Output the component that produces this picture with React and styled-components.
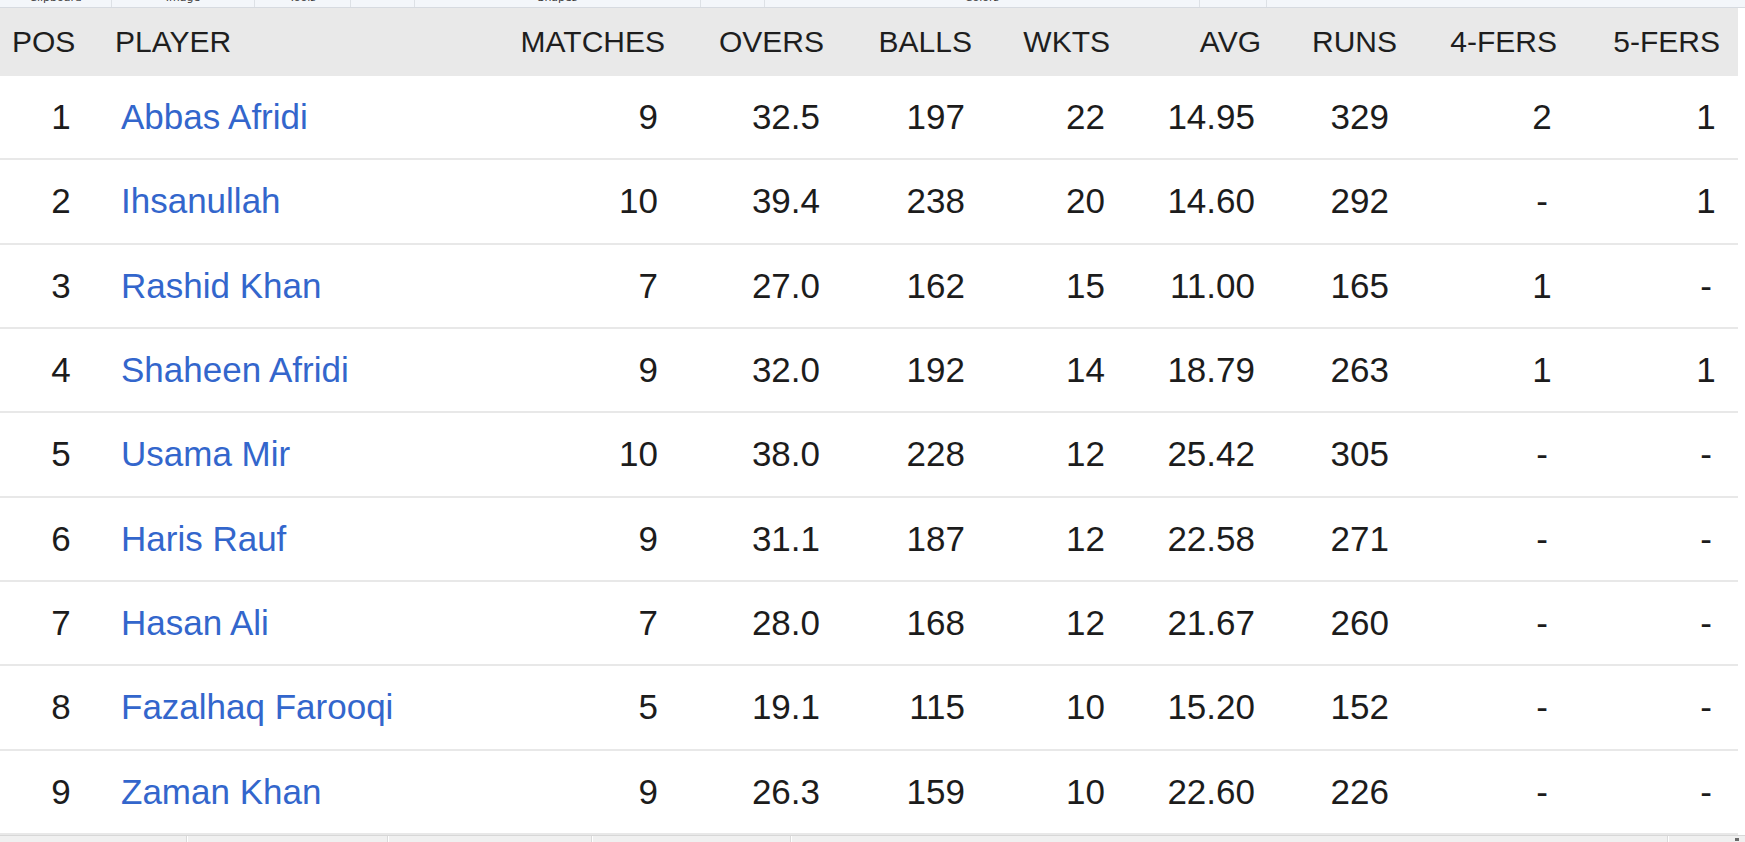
import React from "react";
import styled, { createGlobalStyle } from "styled-components";

const GlobalStyle = createGlobalStyle`
  html, body {
    margin: 0;
    padding: 0;
    background: #ffffff;
    overflow: hidden;
  }
  body {
    font-family: "Liberation Sans", Arial, sans-serif;
  }
`;

const columns = [
  { key: "pos", label: "POS", width: 100, head: "left", hpad: "0 0 0 12px", body: "center", bpad: "0 0 0 22px" },
  { key: "player", label: "PLAYER", width: 350, head: "left", hpad: "0 0 0 15px", body: "left", bpad: "0 0 0 21px" },
  { key: "matches", label: "MATCHES", width: 220, head: "right", hpad: "0 5px 0 0", body: "right", bpad: "0 12px 0 0" },
  { key: "overs", label: "OVERS", width: 160, head: "right", hpad: "0 6px 0 0", body: "right", bpad: "0 10px 0 0" },
  { key: "balls", label: "BALLS", width: 146, head: "right", hpad: "0 4px 0 0", body: "right", bpad: "0 11px 0 0" },
  { key: "wkts", label: "WKTS", width: 138, head: "right", hpad: "0 4px 0 0", body: "right", bpad: "0 9px 0 0" },
  { key: "avg", label: "AVG", width: 152, head: "right", hpad: "0 5px 0 0", body: "right", bpad: "0 11px 0 0" },
  { key: "runs", label: "RUNS", width: 136, head: "right", hpad: "0 5px 0 0", body: "right", bpad: "0 13px 0 0" },
  { key: "four", label: "4-FERS", width: 160, head: "right", hpad: "0 5px 0 0", body: "center", bpad: "0 0 0 120px" },
  { key: "five", label: "5-FERS", width: 176, head: "right", hpad: "0 18px 0 0", body: "center", bpad: "0 0 0 112px" },
];

const players = [
  ["1", "Abbas Afridi", "9", "32.5", "197", "22", "14.95", "329", "2", "1"],
  ["2", "Ihsanullah", "10", "39.4", "238", "20", "14.60", "292", "-", "1"],
  ["3", "Rashid Khan", "7", "27.0", "162", "15", "11.00", "165", "1", "-"],
  ["4", "Shaheen Afridi", "9", "32.0", "192", "14", "18.79", "263", "1", "1"],
  ["5", "Usama Mir", "10", "38.0", "228", "12", "25.42", "305", "-", "-"],
  ["6", "Haris Rauf", "9", "31.1", "187", "12", "22.58", "271", "-", "-"],
  ["7", "Hasan Ali", "7", "28.0", "168", "12", "21.67", "260", "-", "-"],
  ["8", "Fazalhaq Farooqi", "5", "19.1", "115", "10", "15.20", "152", "-", "-"],
  ["9", "Zaman Khan", "9", "26.3", "159", "10", "22.60", "226", "-", "-"],
];

const ribbonGroups = [
  { label: "Clipboard", width: 111 },
  { label: "Image", width: 142 },
  { label: "Tools", width: 95 },
  { label: "", width: 63 },
  { label: "Shapes", width: 285 },
  { label: "", width: 63 },
  { label: "Colors", width: 434 },
  { label: "", width: 66 },
];

const statusCells = [186, 200, 203, 198, 876];

const gridCols = columns.map((c) => `${c.width}px`).join(" ");

const App = () => {
  return (
    <Page>
      <GlobalStyle />
      <Ribbon>
        {ribbonGroups.map((g, i) => (
          <RibbonGroup key={i} $w={g.width}>
            <RibbonLabel>{g.label}</RibbonLabel>
          </RibbonGroup>
        ))}
      </Ribbon>

      <Table>
        <HeadRow>
          {columns.map((c) => (
            <HeadCell key={c.key} $align={c.head} $pad={c.hpad}>
              {c.label}
            </HeadCell>
          ))}
        </HeadRow>
        <Body>
          {players.map((row) => (
            <Row key={row[0]}>
              {row.map((val, i) => (
                <Cell
                  key={columns[i].key}
                  $align={columns[i].body}
                  $pad={columns[i].bpad}
                  $link={i === 1}
                >
                  {val}
                </Cell>
              ))}
            </Row>
          ))}
        </Body>
      </Table>

      <StatusBar>
        {statusCells.map((w, i) => (
          <StatusCell key={i} $w={w} />
        ))}
        <Grip />
      </StatusBar>
    </Page>
  );
};

export default App;

const Page = styled.div`
  width: 1745px;
  height: 842px;
  display: flex;
  flex-direction: column;
  background: #ffffff;
  overflow: hidden;
`;

const Ribbon = styled.div`
  height: 7px;
  flex: none;
  display: flex;
  background: #f3f6fa;
  border-bottom: 1px solid #d6dae0;
  overflow: hidden;
`;

const RibbonGroup = styled.div`
  width: ${(p) => p.$w}px;
  flex: none;
  border-right: 1px solid #dde1e6;
  display: flex;
  justify-content: center;
  overflow: hidden;
`;

const RibbonLabel = styled.span`
  font-family: "DejaVu Sans", sans-serif;
  font-size: 11px;
  line-height: 12px;
  margin-top: -8px;
  color: #3c3c3c;
  white-space: nowrap;
`;

const Table = styled.div`
  width: 1738px;
  flex: none;
  display: flex;
  flex-direction: column;
`;

const HeadRow = styled.div`
  display: grid;
  grid-template-columns: ${gridCols};
  height: 68px;
  align-items: center;
  background: #e9e9e9;
`;

const HeadCell = styled.div`
  font-size: 30px;
  color: #1e1e1e;
  text-align: ${(p) => p.$align};
  padding: ${(p) => p.$pad};
  white-space: nowrap;
`;

const Body = styled.div`
  display: grid;
  grid-auto-rows: calc(759px / 9);
`;

const Row = styled.div`
  display: grid;
  grid-template-columns: ${gridCols};
  align-items: center;
  border-bottom: 2px solid #e8e8e8;
  box-sizing: border-box;
`;

const Cell = styled.div`
  font-size: 35px;
  color: ${(p) => (p.$link ? "#3366cc" : "#1c1c1c")};
  text-align: ${(p) => p.$align};
  padding: ${(p) => p.$pad};
  white-space: nowrap;
`;

const StatusBar = styled.div`
  flex: 1;
  display: flex;
  background: #f0f0f0;
  border-top: 1px solid #d7d7d7;
  position: relative;
`;

const StatusCell = styled.div`
  width: ${(p) => p.$w}px;
  flex: none;
  border-right: 1px solid #dadada;
  box-shadow: 1px 0 0 #ffffff;
`;

const Grip = styled.div`
  position: absolute;
  right: 6px;
  bottom: 1px;
  width: 4px;
  height: 3px;
  background: #6a6a6a;
`;
